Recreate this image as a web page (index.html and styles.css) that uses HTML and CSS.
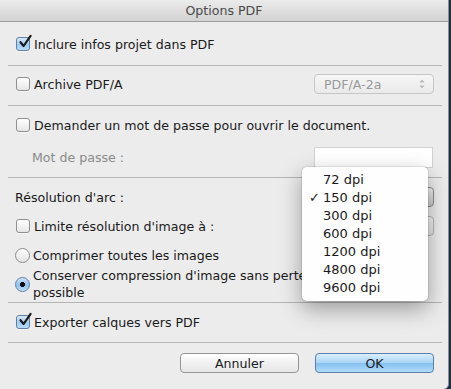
FILE: index.html
```html
<!DOCTYPE html>
<html lang="fr">
<head>
<meta charset="utf-8">
<title>Options PDF</title>
<link rel="stylesheet" href="styles.css">
</head>
<body>
<div class="window">
  <div class="titlebar">Options PDF</div>

  <div class="section s1">
    <label class="row">
      <span class="check checked"><svg viewBox="0 0 16 16" width="16" height="16"><path d="M3.5 8.2 L6.6 12 L13.6 1.8" fill="none" stroke="#1a1a1a" stroke-width="2.2" stroke-linecap="round" stroke-linejoin="round"/></svg></span>
      <span class="lbl">Inclure infos projet dans PDF</span>
    </label>
  </div>
  <div class="sep"></div>

  <div class="section s2">
    <div class="row spread">
      <label class="row"><span class="check"></span><span class="lbl">Archive PDF/A</span></label>
      <div class="popup disabled"><span>PDF/A-2a</span>
        <svg class="arrows" viewBox="0 0 8 12" width="8" height="12"><path d="M1.5 4.5 L4 1.5 L6.5 4.5 Z M1.5 7.5 L4 10.5 L6.5 7.5 Z" fill="#b9b9b9"/></svg>
      </div>
    </div>
  </div>
  <div class="sep"></div>

  <div class="section s3">
    <label class="row"><span class="check"></span><span class="lbl">Demander un mot de passe pour ouvrir le document.</span></label>
    <div class="row spread pw">
      <span class="lbl muted">Mot de passe :</span>
      <div class="field"></div>
    </div>
  </div>
  <div class="sep"></div>

  <div class="section s4">
    <div class="row spread">
      <span class="lbl">Résolution d'arc :</span>
      <div class="popup active"></div>
    </div>
    <div class="row spread">
      <label class="row"><span class="check"></span><span class="lbl">Limite résolution d'image à :</span></label>
      <div class="popup dim"></div>
    </div>
    <label class="row radio-row r1"><span class="radio"></span><span class="lbl">Comprimer toutes les images</span></label>
    <label class="row radio-row r2"><span class="radio on"></span><span class="lbl two">Conserver compression d'image sans perte si<br>possible</span></label>
  </div>
  <div class="sep"></div>

  <div class="section s5">
    <label class="row">
      <span class="check checked"><svg viewBox="0 0 16 16" width="16" height="16"><path d="M3.5 8.2 L6.6 12 L13.6 1.8" fill="none" stroke="#1a1a1a" stroke-width="2.2" stroke-linecap="round" stroke-linejoin="round"/></svg></span>
      <span class="lbl">Exporter calques vers PDF</span>
    </label>
  </div>
  <div class="sep"></div>

  <div class="section s6">
    <button class="btn">Annuler</button>
    <button class="btn default">OK</button>
  </div>

  <ul class="menu">
    <li>72 dpi</li>
    <li class="sel">150 dpi</li>
    <li>300 dpi</li>
    <li>600 dpi</li>
    <li>1200 dpi</li>
    <li>4800 dpi</li>
    <li>9600 dpi</li>
  </ul>
</div>
</body>
</html>
```

FILE: styles.css
```css
html, body {
  margin: 0;
  padding: 0;
}
body {
  width: 451px;
  height: 389px;
  background: #1e2c48;
  overflow: hidden;
  font-family: "DejaVu Sans", "Liberation Sans", sans-serif;
  font-size: 12.6px;
  color: #1a1a1a;
}
.window {
  position: relative;
  width: 448px;
  height: 389px;
  background: #ececec;
  border-right: 1px solid #8e8e8e;
  border-bottom-right-radius: 5px;
  display: flex;
  flex-direction: column;
}
.titlebar {
  height: 21px;
  line-height: 21px;
  text-align: center;
  color: #4a4a4a;
  font-size: 12.6px;
  background: linear-gradient(#ebebeb, #d2d2d2);
  border-bottom: 1px solid #9c9c9c;
  box-sizing: content-box;
}
.sep {
  height: 1px;
  background: #b5b5b5;
  margin: 0 6px 0 8px;
}
.section {
  padding-left: 15px;
  padding-right: 14px;
  display: flex;
  flex-direction: column;
}
.s1 { padding-top: 12px; padding-bottom: 11px; }
.s2 { padding-top: 8px; padding-bottom: 11px; }
.s3 { padding-top: 9px; padding-bottom: 10px; gap: 12px; }
.s4 { padding-top: 9px; padding-bottom: 1px; gap: 9px; }
.s5 { padding-top: 9px; padding-bottom: 10px; }
.s6 {
  flex-direction: row;
  justify-content: flex-end;
  gap: 16px;
  padding-top: 10px;
}
.row {
  display: flex;
  align-items: center;
  height: 20px;
}
.spread { justify-content: space-between; }
.lbl { white-space: nowrap; }
.muted { color: #8a8a8a; padding-left: 17px; }
.check {
  position: relative;
  box-sizing: border-box;
  width: 14px;
  height: 14px;
  margin: 0 4px 0 1px;
  border: 1px solid #8f8f8f;
  border-radius: 3px;
  background: linear-gradient(#ffffff, #e6e6e6);
  box-shadow: 0 1px 0 rgba(255,255,255,0.6);
  flex: none;
}
.check.checked {
  border-color: #5f7fa6;
  background: linear-gradient(#d8eafa, #9ecbf1 55%, #b7dcf7);
}
.check svg {
  position: absolute;
  left: 0;
  top: -4px;
}
.popup {
  position: relative;
  box-sizing: border-box;
  width: 120px;
  height: 20px;
  border-radius: 4px;
  border: 1px solid #c6c6c6;
  background: linear-gradient(#f6f6f6, #eaeaea);
  display: flex;
  align-items: center;
  padding-left: 9px;
}
.popup.disabled { color: #9a9a9a; }
.popup .arrows { position: absolute; right: 7px; top: 3px; }
.popup.active {
  border-color: #8c8c8c;
  background: linear-gradient(#f2f2f2, #c8c8c8);
}
.popup.dim {
  border-color: #b4b4b4;
  background: linear-gradient(#f4f4f4, #e2e2e2);
}
.field {
  box-sizing: border-box;
  width: 119px;
  height: 21px;
  background: #ffffff;
  border: 1px solid #d2d2d2;
  margin-right: 1px;
}
.radio-row { gap: 3px; }
.radio {
  box-sizing: border-box;
  width: 15px;
  height: 15px;
  border-radius: 50%;
  border: 1px solid #8c8c8c;
  background: linear-gradient(#ffffff, #e3e3e3);
  flex: none;
  margin-left: 0;
  position: relative;
}
.radio.on {
  border-color: #5f7fa6;
  background: radial-gradient(circle at 50% 50%, #111 0, #111 2.3px, transparent 2.8px), linear-gradient(#cfe4f8, #8fc2ef 55%, #bfe0f8);
}
.r1 { margin-bottom: -7px; }
.r2 { height: 34px; }
.lbl.two { line-height: 17px; white-space: normal; }
.btn {
  box-sizing: border-box;
  width: 119px;
  height: 20px;
  border-radius: 4px;
  border: 1px solid #959595;
  background: linear-gradient(#ffffff, #f1f1f1 50%, #e6e6e6);
  font-family: "DejaVu Sans", "Liberation Sans", sans-serif;
  font-size: 12.6px;
  color: #1a1a1a;
  padding: 0;
}
.btn.default {
  border-color: #5b7fa8;
  background: linear-gradient(#dbeefc, #a9d4f6 50%, #82c0f1 51%, #b4dcf9);
  margin-right: 0;
}
.menu {
  position: absolute;
  left: 302px;
  top: 167px;
  width: 126px;
  height: 134px;
  margin: 0;
  padding: 4px 0 0 0;
  box-sizing: border-box;
  list-style: none;
  background: #fefefe;
  border-radius: 5px;
  box-shadow: 0 0 0 1px rgba(0,0,0,0.08), 0 8px 22px rgba(0,0,0,0.35);
}
.menu li {
  height: 18px;
  line-height: 18px;
  padding-left: 21px;
  position: relative;
  font-size: 13px;
}
.menu li.sel::before {
  content: "✓";
  position: absolute;
  left: 7px;
  top: 0;
}
```
